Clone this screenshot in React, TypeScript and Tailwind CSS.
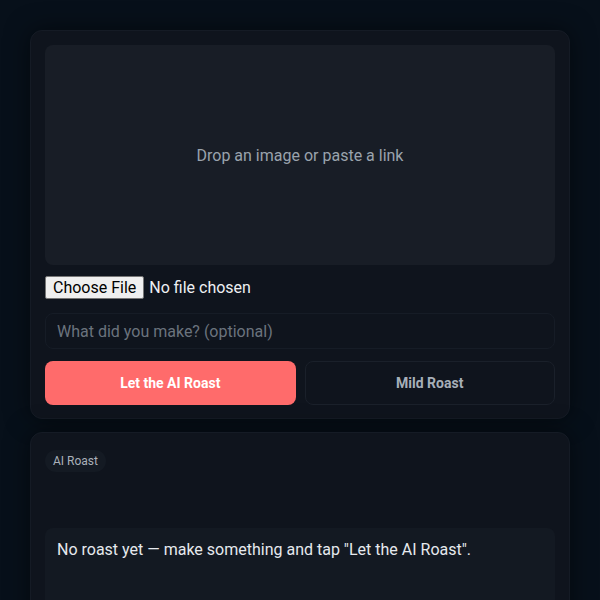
import { useState } from "react";

export default function App() {
  const [note, setNote] = useState("");

  return (
    <div className="min-h-[600px] bg-[#07101a] text-[#e6e9ee] font-['Roboto',sans-serif] px-[30px] pt-[30px] pb-10">
      {/* Upload card */}
      <section className="rounded-xl bg-[#0f141d] border border-[#151b25] shadow-[0_0_24px_rgba(0,0,0,0.5)] px-[14px] pt-[14px] pb-[13px]">
        <div className="h-[220px] rounded-lg bg-[#181d26] flex items-center justify-center pt-[2px]">
          <span className="text-[16px] text-[#9aa3ad]">Drop an image or paste a link</span>
        </div>

        <input
          type="file"
          className="mt-[11px] block text-[16px] leading-[19px] text-[#eef0f3] file:mr-[5px] file:bg-[#efefef] file:text-black file:border file:border-[#767676] file:rounded-[2px] file:px-[7px] file:py-[1px]"
        />

        <input
          value={note}
          onChange={(e) => setNote(e.target.value)}
          placeholder="What did you make? (optional)"
          className="mt-[14px] w-full h-[36px] rounded-lg border border-[#161c26] bg-[#0f141d] px-[11px] text-[16px] text-[#e6e9ee] placeholder:text-[#6b737d] outline-none"
        />

        <div className="mt-[12px] grid grid-cols-2 gap-[9px]">
          <button className="h-[44px] rounded-lg bg-[#ff6b6b] text-white text-[14px] font-bold">
            Let the AI Roast
          </button>
          <button className="h-[44px] rounded-lg border border-[#1a202a] bg-[#0f141d] text-[#a7afb8] text-[14px] font-bold">
            Mild Roast
          </button>
        </div>
      </section>

      {/* Result card */}
      <section className="mt-[13px] rounded-xl bg-[#0f141d] border border-[#151b25] shadow-[0_0_24px_rgba(0,0,0,0.5)] px-[14px] pt-[15px] pb-6">
        <span className="inline-block rounded-full bg-[#141a23] px-2 py-[2px] text-[12px] text-[#aab1ba]">
          AI Roast
        </span>
        <div className="mt-[56px] rounded-lg bg-[#131922] px-3 pt-[10px] pb-[14px] min-h-[80px]">
          <p className="text-[16px] text-[#e6e9ee]">
            No roast yet — make something and tap "Let the AI Roast".
          </p>
        </div>
      </section>
    </div>
  );
}
